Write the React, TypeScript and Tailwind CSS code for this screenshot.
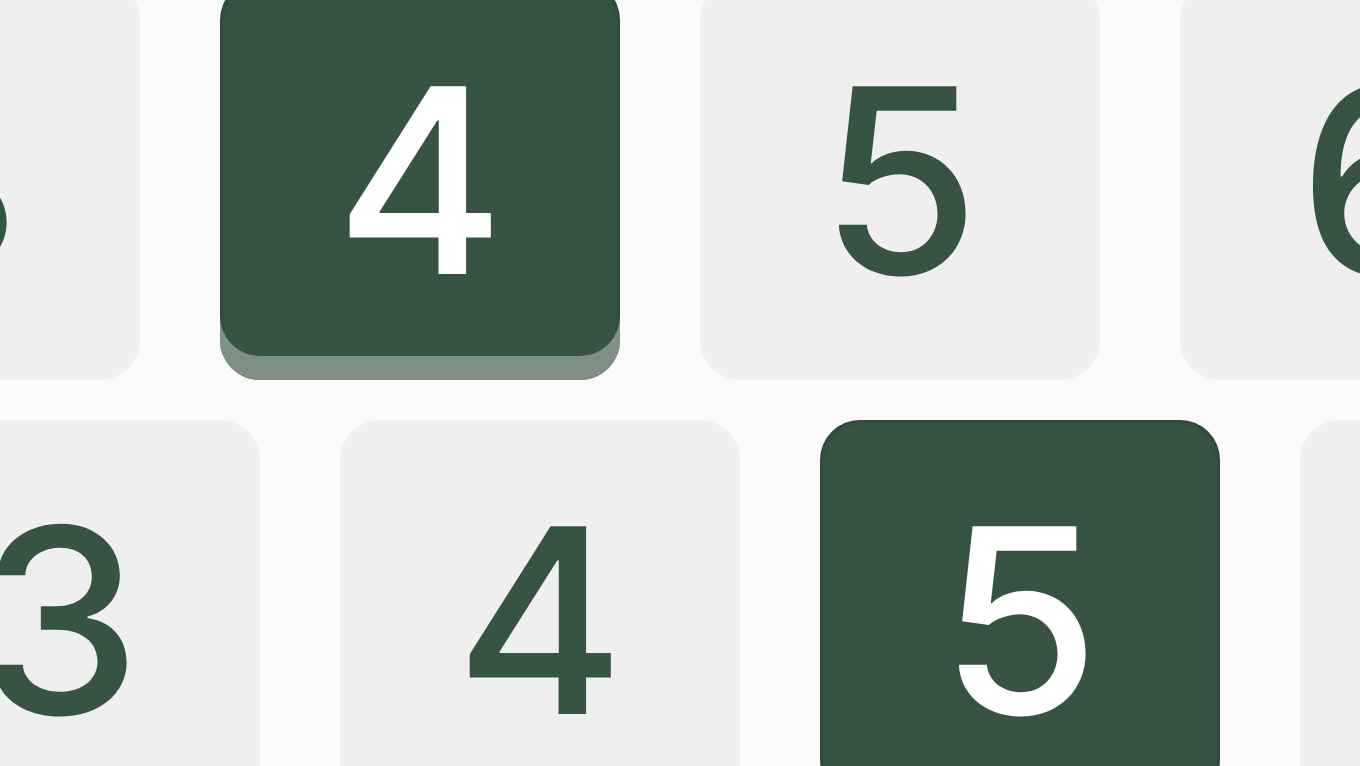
const ROWS: { offset: string; tiles: { n: number; on?: boolean }[] }[] = [
  { offset: "ml-[-260px]", tiles: [{ n: 3 }, { n: 4, on: true }, { n: 5 }, { n: 6 }] },
  { offset: "ml-[-140px]", tiles: [{ n: 3 }, { n: 4 }, { n: 5, on: true }, { n: 6 }] },
];

function Tile({ n, on }: { n: number; on?: boolean }) {
  if (on) {
    return (
      <div className="w-[400px] h-[400px] shrink-0 rounded-[40px] bg-[#375443] flex items-center justify-center text-white shadow-[inset_0_-24px_0_#7e9083,inset_0_0_6px_rgba(0,0,0,0.35)]">
        <span className="text-[258px] font-medium leading-none">{n}</span>
      </div>
    );
  }
  return (
    <div className="w-[400px] h-[400px] shrink-0 rounded-[40px] bg-[#efefef] flex items-center justify-center text-[#375443]">
      <span className="text-[258px] font-medium leading-none">{n}</span>
    </div>
  );
}

export default function App() {
  return (
    <div
      className="w-[1360px] h-[766px] overflow-hidden bg-[#fafafa]"
      style={{ fontFamily: "Inter, 'Noto Sans', sans-serif" }}
    >
      <div className="flex flex-col gap-10 mt-[-20px]">
        {ROWS.map((row, i) => (
          <div key={i} className={`flex gap-20 ${row.offset}`}>
            {row.tiles.map((t, j) => (
              <Tile key={j} n={t.n} on={t.on} />
            ))}
          </div>
        ))}
      </div>
    </div>
  );
}
